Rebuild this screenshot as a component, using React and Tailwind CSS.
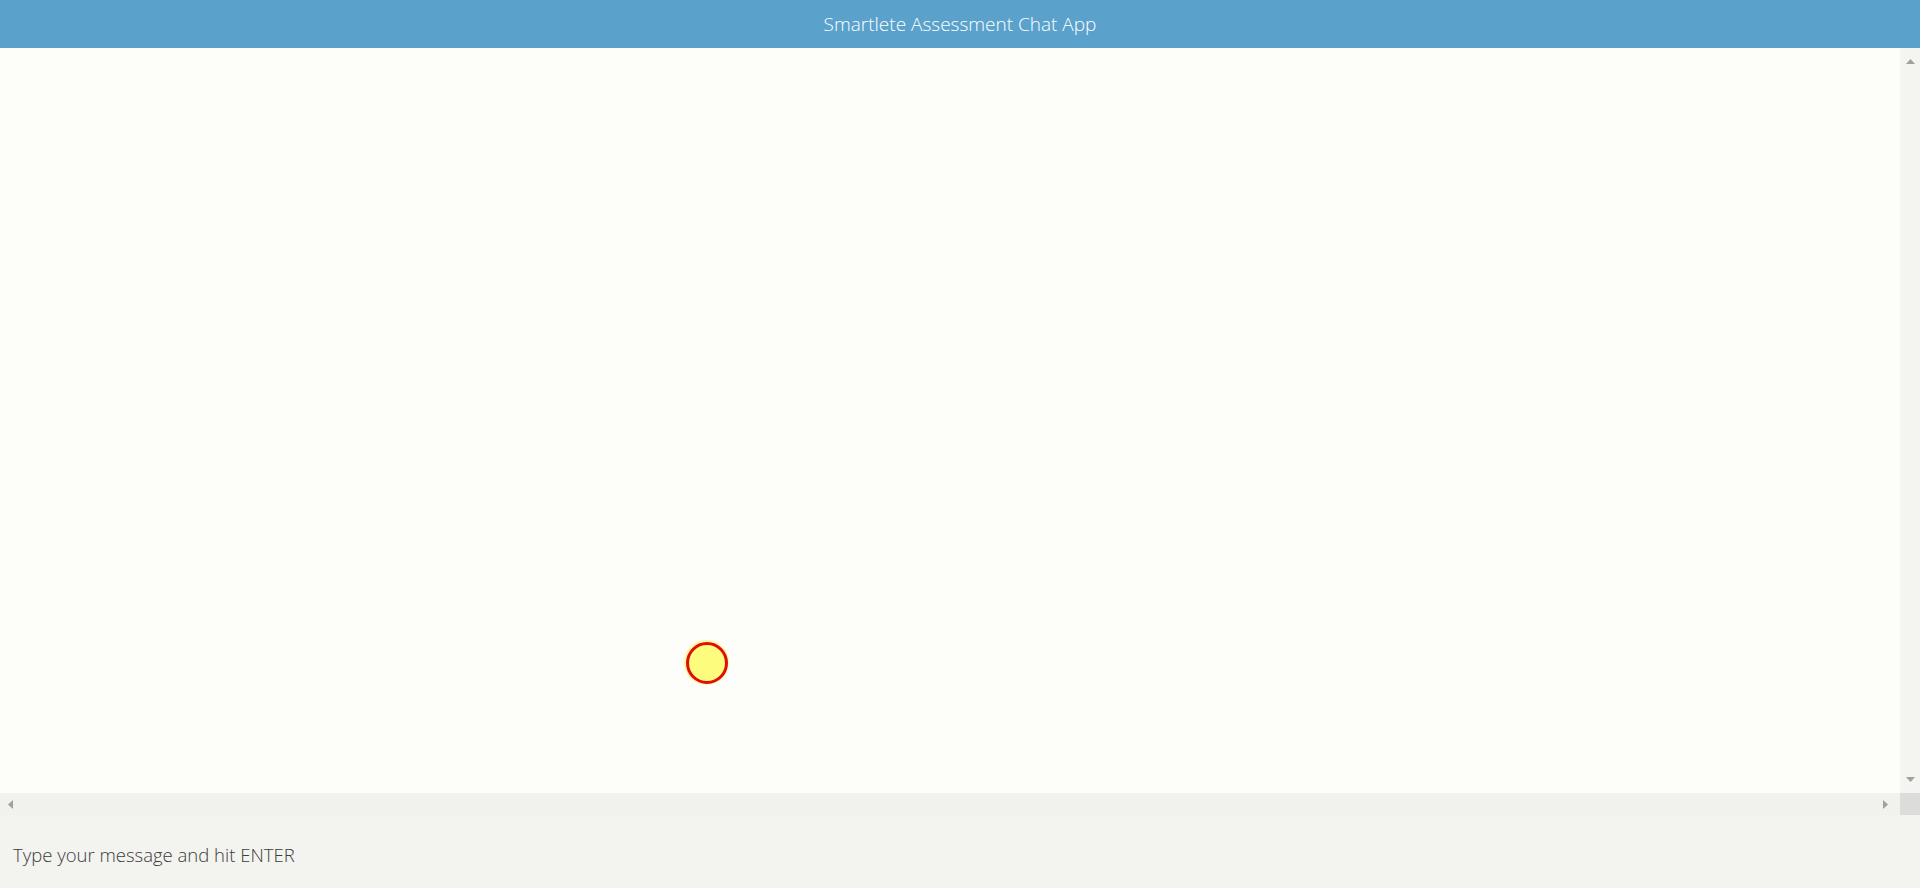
import React from "react";

const Tri = ({ dir }) => {
  const shapes = {
    up: "0,7 4.5,2 9,7",
    down: "0,2 4.5,7 9,2",
    left: "7,0 2,4.5 7,9",
    right: "2,0 7,4.5 2,9",
  };
  return (
    <svg width="9" height="9" viewBox="0 0 9 9" className="block">
      <polygon points={shapes[dir]} fill="#a0a0a0" />
    </svg>
  );
};

export default function App() {
  return (
    <div
      className="w-[1920px] h-[888px] flex flex-col overflow-hidden bg-[#fdfefa]"
      style={{ fontFamily: '"Open Sans", "Noto Sans", sans-serif' }}
    >
      {/* Header */}
      <header className="h-[48px] shrink-0 bg-[#5aa2cc] flex items-center justify-center">
        <h1 className="text-[19px] font-light text-white">
          Smartlete Assessment Chat App
        </h1>
      </header>

      {/* Messages area with scrollbars */}
      <div className="flex-1 flex min-h-0">
        <div className="flex-1 relative bg-[#fdfefa]">
          {/* cursor highlight */}
          <div className="absolute left-[684px] top-[592px] w-[45px] h-[45px] rounded-full bg-[#fff7a0] flex items-center justify-center">
            <div className="w-[42px] h-[42px] rounded-full border-[3px] border-[#e00d0d] bg-[#fdfc7c]" />
          </div>
        </div>
        <div className="w-[20px] bg-[#f4f4f0] flex flex-col items-center justify-between py-[9px]">
          <Tri dir="up" />
          <Tri dir="down" />
        </div>
      </div>

      <div className="h-[22px] shrink-0 flex bg-[#f1f1ed]">
        <div className="flex-1 flex items-center justify-between pl-[6px] pr-[10px]">
          <Tri dir="left" />
          <Tri dir="right" />
        </div>
        <div className="w-[20px] bg-[#dcdcda]" />
      </div>

      {/* Input */}
      <div className="h-[73px] shrink-0 bg-[#f3f3ef] flex items-center px-[13px] pt-[6px]">
        <input
          className="w-full bg-transparent outline-none text-[18.5px] font-light text-[#3c3c3c] placeholder:text-[#3c3c3c]"
          placeholder="Type your message and hit ENTER"
        />
      </div>
    </div>
  );
}
